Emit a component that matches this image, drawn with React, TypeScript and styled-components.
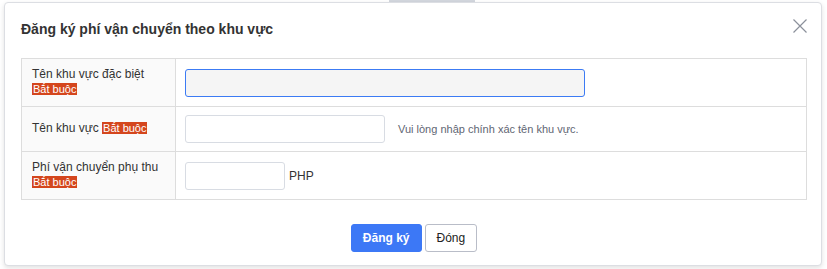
import styled, { createGlobalStyle } from 'styled-components';

const GlobalStyle = createGlobalStyle`
  html, body {
    margin: 0;
    padding: 0;
    background: #fff;
  }
  body {
    font-family: "Liberation Sans", Arial, sans-serif;
    color: #333;
  }
  * {
    box-sizing: border-box;
  }
`;

const Page = styled.div`
  position: relative;
  width: 827px;
  height: 269px;
  padding: 2px 0 0 4px;
  overflow: hidden;
`;

const Backdrop = styled.div`
  position: absolute;
  top: 0;
  left: 389px;
  width: 86px;
  height: 2px;
  background: #d3d7de;
`;

const Modal = styled.div`
  position: relative;
  width: 818px;
  height: 264px;
  border: 1px solid #dcdee3;
  border-radius: 4px;
  background: #fff;
  box-shadow: 0 2px 5px rgba(0, 0, 0, 0.12);
  padding: 16px 14px 14px 16px;
  display: flex;
  flex-direction: column;
`;

const Header = styled.div`
  display: flex;
  justify-content: space-between;
  align-items: flex-start;
`;

const Title = styled.h3`
  margin: 0;
  font-size: 14px;
  line-height: 20px;
  font-weight: bold;
  color: #333;
`;

const CloseButton = styled.button`
  width: 14px;
  height: 14px;
  padding: 0;
  border: 0;
  background: none;
  cursor: pointer;
  display: block;

  svg {
    display: block;
  }
`;

const FormTable = styled.div`
  margin-top: 19px;
  border: 1px solid #dddddd;
`;

const Row = styled.div`
  display: flex;
  & + & {
    border-top: 1px solid #dddddd;
  }
`;

const LabelCell = styled.div`
  width: 154px;
  flex-shrink: 0;
  background: #fafafa;
  border-right: 1px solid #dddddd;
  padding: 8px 10px 9px;
  font-size: 12px;
  line-height: 15px;
  color: #333;
  display: flex;
  align-items: center;
`;

const ValueCell = styled.div<{ gap: number }>`
  flex: 1;
  padding: 8px 9px;
  display: flex;
  align-items: center;
  gap: ${(p) => p.gap}px;
`;

const Required = styled.span`
  background: #d4461d;
  color: #fff;
  font-size: 11px;
  padding: 0 1px;
  white-space: nowrap;
`;

const TextInput = styled.input<{ w: number; focused?: boolean }>`
  width: ${(p) => p.w}px;
  height: 28px;
  border: 1px solid ${(p) => (p.focused ? '#3c7bf4' : '#d8dce3')};
  border-radius: 3px;
  background: ${(p) => (p.focused ? '#f5f5f5' : '#fff')};
  font-family: inherit;
  font-size: 12px;
  padding: 0 8px;
  outline: none;
`;

const Hint = styled.span`
  font-size: 11px;
  color: #5f6673;
`;

const Unit = styled.span`
  font-size: 12px;
  color: #333;
`;

const Footer = styled.div`
  margin-top: 24px;
  display: flex;
  justify-content: center;
  gap: 3px;
`;

const Button = styled.button<{ primary?: boolean }>`
  height: 28px;
  padding: 0 11px;
  border-radius: 3px;
  font-family: inherit;
  font-size: 12px;
  cursor: pointer;
  border: 1px solid ${(p) => (p.primary ? '#3c78f6' : '#b9bdc8')};
  background: ${(p) => (p.primary ? '#3c78f6' : '#fff')};
  color: ${(p) => (p.primary ? '#fff' : '#222')};
  font-weight: ${(p) => (p.primary ? 'bold' : 'normal')};
`;

const CloseIcon = () => (
  <svg width="14" height="14" viewBox="0 0 14 14">
    <path d="M0.5 0.5 L13.5 13.5 M13.5 0.5 L0.5 13.5" stroke="#8b909b" strokeWidth="1.2" fill="none" />
  </svg>
);

export default function App() {
  return (
    <>
      <GlobalStyle />
      <Page>
        <Backdrop />
        <Modal>
          <Header>
            <Title>Đăng ký phí vận chuyển theo khu vực</Title>
            <CloseButton aria-label="Đóng">
              <CloseIcon />
            </CloseButton>
          </Header>
          <FormTable>
            <Row>
              <LabelCell>
                <div>
                  Tên khu vực đặc biệt
                  <br />
                  <Required>Bắt buộc</Required>
                </div>
              </LabelCell>
              <ValueCell gap={0}>
                <TextInput w={400} focused />
              </ValueCell>
            </Row>
            <Row>
              <LabelCell>
                <div>
                  Tên khu vực <Required>Bắt buộc</Required>
                </div>
              </LabelCell>
              <ValueCell gap={13}>
                <TextInput w={200} />
                <Hint>Vui lòng nhập chính xác tên khu vực.</Hint>
              </ValueCell>
            </Row>
            <Row>
              <LabelCell>
                <div>
                  Phí vận chuyển phụ thu
                  <br />
                  <Required>Bắt buộc</Required>
                </div>
              </LabelCell>
              <ValueCell gap={4}>
                <TextInput w={100} />
                <Unit>PHP</Unit>
              </ValueCell>
            </Row>
          </FormTable>
          <Footer>
            <Button primary>Đăng ký</Button>
            <Button>Đóng</Button>
          </Footer>
        </Modal>
      </Page>
    </>
  );
}
